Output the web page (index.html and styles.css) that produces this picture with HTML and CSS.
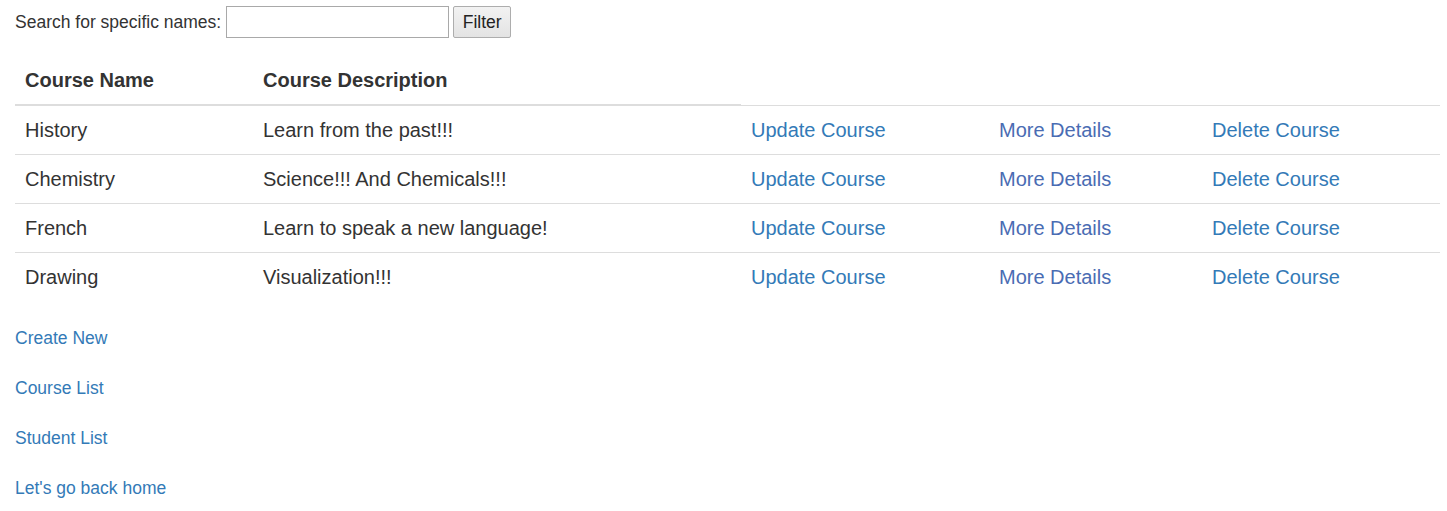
FILE: index.html
```html
<!DOCTYPE html>
<html lang="en">
<head>
<meta charset="utf-8">
<title>Courses</title>
<link rel="stylesheet" href="styles.css">
</head>
<body>
<div class="page">
  <form class="search">
    <label class="search-label" for="q">Search for specific names:</label>
    <input class="search-input" id="q" type="text">
    <button class="search-btn" type="button">Filter</button>
  </form>

  <table class="courses">
    <colgroup>
      <col class="c-name">
      <col class="c-desc">
      <col class="c-upd">
      <col class="c-more">
      <col class="c-del">
    </colgroup>
    <thead>
      <tr>
        <th>Course Name</th>
        <th>Course Description</th>
      </tr>
    </thead>
    <tbody>
      <tr>
        <td>History</td>
        <td>Learn from the past!!!</td>
        <td><a href="#">Update Course</a></td>
        <td><a class="visited" href="#">More Details</a></td>
        <td><a href="#">Delete Course</a></td>
      </tr>
      <tr>
        <td>Chemistry</td>
        <td>Science!!! And Chemicals!!!</td>
        <td><a href="#">Update Course</a></td>
        <td><a class="visited" href="#">More Details</a></td>
        <td><a href="#">Delete Course</a></td>
      </tr>
      <tr>
        <td>French</td>
        <td>Learn to speak a new language!</td>
        <td><a href="#">Update Course</a></td>
        <td><a class="visited" href="#">More Details</a></td>
        <td><a href="#">Delete Course</a></td>
      </tr>
      <tr>
        <td>Drawing</td>
        <td>Visualization!!!</td>
        <td><a href="#">Update Course</a></td>
        <td><a class="visited" href="#">More Details</a></td>
        <td><a href="#">Delete Course</a></td>
      </tr>
    </tbody>
  </table>

  <nav class="links">
    <a href="#">Create New</a>
    <a href="#">Course List</a>
    <a href="#">Student List</a>
    <a href="#">Let's go back home</a>
  </nav>
</div>
</body>
</html>
```

FILE: styles.css
```css
html, body {
  margin: 0;
  padding: 0;
  background: #fff;
}

body {
  font-family: "Liberation Sans", Arial, Helvetica, sans-serif;
  font-size: 17.5px;
  line-height: 25px;
  color: #333;
}

a {
  color: #337ab7;
  text-decoration: none;
}

.page {
  padding: 6px 0 0 15px;
}

.search {
  display: flex;
  align-items: center;
  height: 32px;
  margin: 0;
}

.search-label {
  margin-right: 5px;
}

.search-input {
  box-sizing: border-box;
  width: 223px;
  height: 32px;
  margin: 0 4px 0 0;
  padding: 1px 2px;
  border: 1px solid #a9a9a9;
  font-family: inherit;
  font-size: 17.5px;
  background: #fff;
}

.search-btn {
  box-sizing: border-box;
  width: 58px;
  height: 32px;
  padding: 0;
  border: 1px solid #adadad;
  border-radius: 2px;
  background: linear-gradient(#f2f2f2, #e3e3e3);
  font-family: inherit;
  font-size: 17.5px;
  color: #222;
}

.courses {
  table-layout: fixed;
  width: 1425px;
  margin: 18px 0 25px 0;
  border-collapse: collapse;
  border-spacing: 0;
  font-size: 20px;
  line-height: 28px;
}

.c-name { width: 238px; }
.c-desc { width: 488px; }
.c-upd  { width: 248px; }
.c-more { width: 213px; }
.c-del  { width: 238px; }

.courses th {
  padding: 10px;
  text-align: left;
  font-weight: bold;
  vertical-align: bottom;
  border-bottom: 2px solid #ddd;
}

.courses td {
  padding: 10px;
  vertical-align: top;
  border-top: 1px solid #ddd;
  white-space: nowrap;
}

.courses a.visited {
  color: #4a6cb3;
}

.links {
  display: flex;
  flex-direction: column;
  align-items: flex-start;
  gap: 25px;
}
```
